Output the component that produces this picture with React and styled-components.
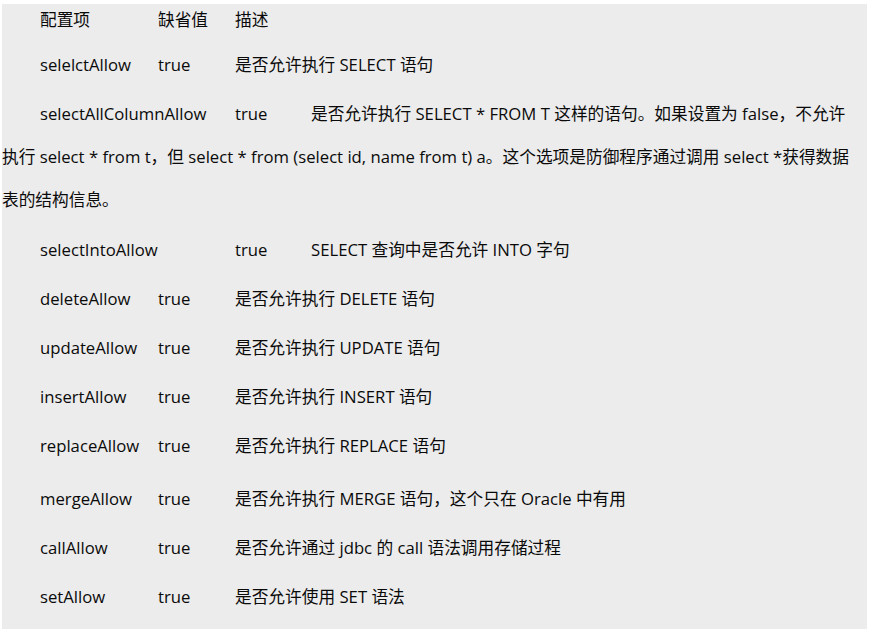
import styled, { createGlobalStyle } from 'styled-components';

const GlobalStyle = createGlobalStyle`
  body {
    margin: 0;
    background: #ffffff;
  }
`;

const Page = styled.div`
  padding: 4px 8px 6px 2px;
`;

const Panel = styled.div`
  width: 865px;
  box-sizing: border-box;
  background: #ececec;
  padding: 4px 0 20px 0;
  font-family: "Open Sans", "Noto Sans CJK SC", sans-serif;
  font-size: 16.7px;
  color: #0a0a0a;
`;

const Row = styled.p`
  margin: ${(p) => p.$gap}px 0 0;
  line-height: 24px;
  white-space: nowrap;
`;

const Para = styled.p`
  margin: ${(p) => p.$gap}px 0 0;
  line-height: 43px;
`;

const Line = styled.span`
  display: block;
  white-space: nowrap;
`;

const Name = styled.span`
  display: inline-block;
  margin-left: 38px;
  width: ${(p) => (p.$wide ? 195 : 118)}px;
`;

const Value = styled.span`
  display: inline-block;
  width: ${(p) => (p.$wide ? 76 : 77)}px;
`;

const rows = [
  { name: '配置项', value: '缺省值', desc: '描述', gap: 0 },
  { name: 'selelctAllow', value: 'true', desc: '是否允许执行 SELECT 语句', gap: 21 },
  { para: true, gap: 15 },
  { name: 'selectIntoAllow', value: 'true', desc: 'SELECT 查询中是否允许 INTO 字句', gap: 17, wide: true },
  { name: 'deleteAllow', value: 'true', desc: '是否允许执行 DELETE 语句', gap: 25 },
  { name: 'updateAllow', value: 'true', desc: '是否允许执行 UPDATE 语句', gap: 25 },
  { name: 'insertAllow', value: 'true', desc: '是否允许执行 INSERT 语句', gap: 25 },
  { name: 'replaceAllow', value: 'true', desc: '是否允许执行 REPLACE 语句', gap: 25 },
  { name: 'mergeAllow', value: 'true', desc: '是否允许执行 MERGE 语句，这个只在 Oracle 中有用', gap: 29 },
  { name: 'callAllow', value: 'true', desc: '是否允许通过 jdbc 的 call 语法调用存储过程', gap: 25 },
  { name: 'setAllow', value: 'true', desc: '是否允许使用 SET 语法', gap: 25 },
];

const ColumnPara = ({ gap }) => (
  <Para $gap={gap}>
    <Line>
      <Name $wide>selectAllColumnAllow</Name>
      <Value $wide>true</Value>
      是否允许执行 SELECT * FROM T 这样的语句。如果设置为 false，不允许
    </Line>
    <Line>执行 select * from t，但 select * from (select id, name from t) a。这个选项是防御程序通过调用 select *获得数据</Line>
    <Line>表的结构信息。</Line>
  </Para>
);

export default function App() {
  return (
    <Page>
      <GlobalStyle />
      <Panel>
        {rows.map((r, i) =>
          r.para ? (
            <ColumnPara key={i} gap={r.gap} />
          ) : (
            <Row key={i} $gap={r.gap}>
              <Name $wide={r.wide}>{r.name}</Name>
              <Value $wide={r.wide}>{r.value}</Value>
              {r.desc}
            </Row>
          )
        )}
      </Panel>
    </Page>
  );
}
